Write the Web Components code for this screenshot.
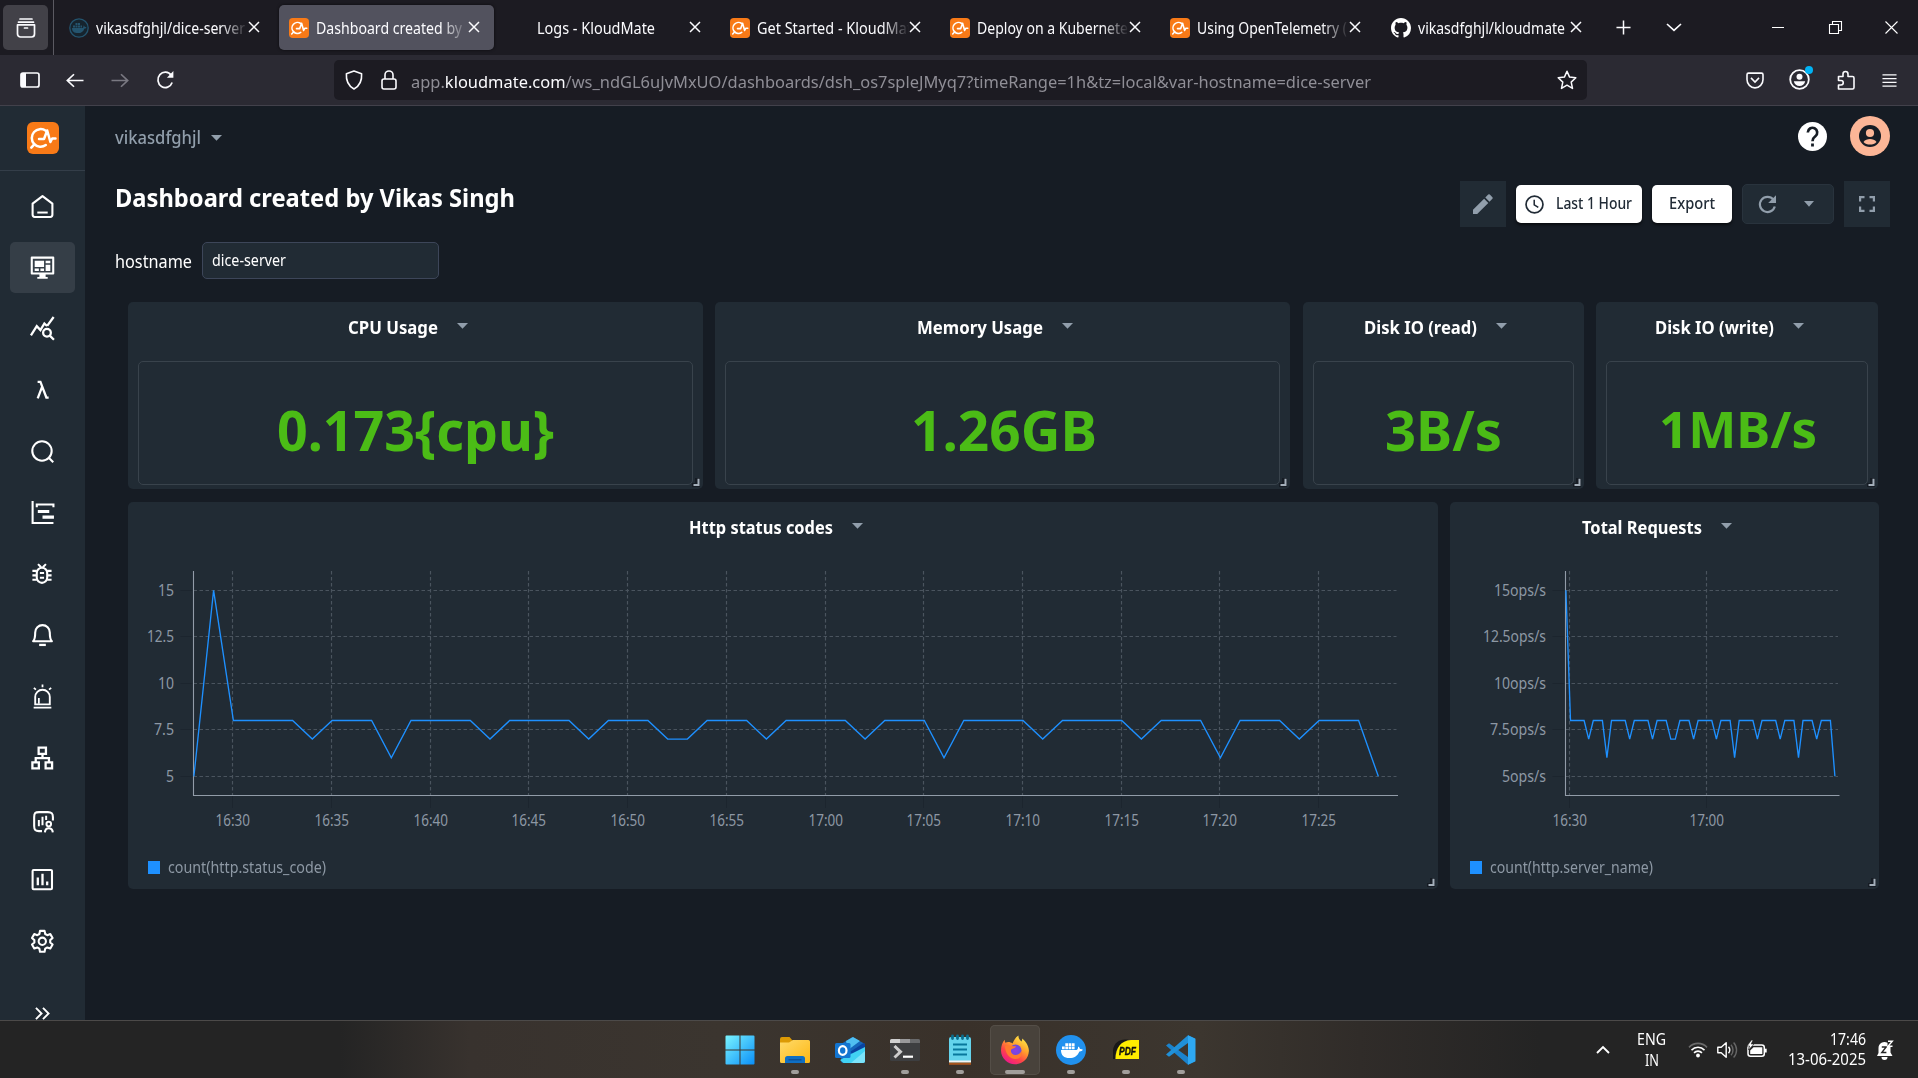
<!DOCTYPE html>
<html lang="en">
<head>
<meta charset="utf-8">
<title>Dashboard - KloudMate</title>
<style>
html,body{margin:0;padding:0;height:100%;overflow:hidden;background:#161c24}
body{font-family:"Noto Sans","Open Sans",sans-serif;color:#fff}
desktop-screen{width:1918px;height:1078px}
</style>
</head>
<body>
<desktop-screen></desktop-screen>
<script>
const ICONS = {
 logo:['0 0 32 32','<rect width="32" height="32" rx="6" fill="#f87a17"/><g fill="none" stroke="#fff" stroke-width="2.500" stroke-linecap="round" stroke-linejoin="round"><path d="M18.800 8.800A8.800 8.800 0 1 0 18.800 23"/><path d="M7.300 22.300L4.300 25.600"/><path d="M12 17h5l3.200-8.500 3.200 11.500 1.800-3.500h3.300"/></g>'],
 archive:['0 0 20 20','<g fill="none" stroke="#fbfbfe" stroke-width="1.7" stroke-linecap="round" stroke-linejoin="round"><path d="M4 1h12"/><path d="M2.5 4.200h15"/><path d="M1.500 6.800h17v9.200a3 3 0 0 1-3 3h-11a3 3 0 0 1-3-3z"/><path d="M8.500 10h3"/></g>'],
 whaleFav:['0 0 20 20','<circle cx="10" cy="10" r="9.200" fill="#16242e" stroke="#24546e" stroke-width="1.300"/><path d="M3 10h10.500c.8 0 1.200-1.600 1-2.500.8.3 1.300 1 1.300 1.600.7 0 1.200.1 1.700.5-.5.9-1.300 1.100-2.200 1.100-1 3-3 4.400-6.300 4.400C5 15.100 3 13.500 3 10zM4 7.500h2v2H4zM6.500 7.500h2v2h-2zM9 7.500h2v2H9zM6.500 5h2v2h-2zM9 5h2v2H9zM11.500 7.500h1.500v2h-1.500z" fill="#24546e"/>'],
 github:['0 0 16 16','<path fill="#fff" d="M8 0C3.580 0 0 3.580 0 8c0 3.540 2.290 6.530 5.470 7.590.4.070.55-.170.55-.380 0-.190-.010-.820-.010-1.490-2.010.370-2.530-.490-2.690-.940-.090-.230-.480-.940-.820-1.130-.280-.150-.680-.520-.010-.530.630-.010 1.080.580 1.230.820.720 1.210 1.870.870 2.330.660.070-.520.280-.870.510-1.070-1.780-.200-3.640-.890-3.640-3.950 0-.870.310-1.590.820-2.150-.080-.200-.360-1.020.080-2.120 0 0 .670-.210 2.200.820.640-.180 1.320-.270 2-.270s1.360.090 2 .270c1.530-1.040 2.200-.820 2.200-.820.440 1.100.160 1.920.080 2.120.510.560.820 1.270.820 2.150 0 3.070-1.870 3.750-3.650 3.950.290.250.540.730.540 1.480 0 1.070-.010 1.930-.010 2.200 0 .210.150.460.550.380A8.010 8.010 0 0 0 16 8c0-4.420-3.580-8-8-8z"/>'],
 x:['0 0 12 12','<path d="M1 1l10 10M11 1L1 11" stroke="#fbfbfe" stroke-width="1.500" fill="none"/>'],
 plus:['0 0 16 16','<path d="M8 .5v15M.5 8h15" stroke="#fbfbfe" stroke-width="1.600"/>'],
 chevD:['0 0 16 10','<path d="M1 1.200l7 7 7-7" fill="none" stroke="#fbfbfe" stroke-width="1.600"/>'],
 min:['0 0 12 12','<path d="M0 5.500h12" stroke="#fff" stroke-width="1"/>'],
 restore:['0 0 13 13','<path d="M.5 3.500h9v9h-9zM3.500 3.500v-3h9v9h-3" fill="none" stroke="#fff" stroke-width="1.100"/>'],
 wx:['0 0 13 13','<path d="M.5 .5l12 12M12.500 .5l-12 12" stroke="#fff" stroke-width="1.100"/>'],
 sidebarBtn:['0 0 20 16','<rect x="1" y="1" width="18" height="14" rx="2" fill="none" stroke="#fbfbfe" stroke-width="1.700"/><path d="M1 1h5v14H1z" fill="#fbfbfe"/>'],
 back:['0 0 18 16','<path d="M17.500 8H1.500M8 1.300L1.300 8 8 14.700" fill="none" stroke="#fbfbfe" stroke-width="1.700"/>'],
 fwd:['0 0 18 16','<path d="M.5 8h16M10 1.300L16.700 8 10 14.700" fill="none" stroke="#7a7982" stroke-width="1.700"/>'],
 reload:['0 0 20 20','<path d="M17 12.500A7.700 7.700 0 1 1 16 5.400" fill="none" stroke="#fbfbfe" stroke-width="1.800"/><path d="M18.300 1v6.800h-6.800z" fill="#fbfbfe"/>'],
 shield:['0 0 18 20','<path d="M9 1l7.600 2.700c.5 6.800-1.700 12-7.600 15.300C3.100 15.700.9 10.500 1.400 3.700z" fill="none" stroke="#fbfbfe" stroke-width="1.600" stroke-linejoin="round"/>'],
 lock:['0 0 16 20','<rect x="1" y="9" width="14" height="10" rx="2" fill="none" stroke="#fbfbfe" stroke-width="1.600"/><path d="M4 9V5a4 4 0 0 1 8 0v4" fill="none" stroke="#fbfbfe" stroke-width="1.600"/>'],
 star:['0 0 20 20','<path d="M10 1.300l2.600 5.800 6.200.7-4.600 4.300 1.300 6.300-5.500-3.200-5.500 3.200 1.300-6.300L1.200 7.800l6.200-.7z" fill="none" stroke="#fbfbfe" stroke-width="1.500" stroke-linejoin="round"/>'],
 pocket:['0 0 18 16','<path d="M2.500 1h13A1.500 1.500 0 0 1 17 2.500V7A8 8 0 0 1 1 7V2.500A1.500 1.500 0 0 1 2.500 1z" fill="none" stroke="#fbfbfe" stroke-width="1.600"/><path d="M5 5.500l4 4 4-4" fill="none" stroke="#fbfbfe" stroke-width="1.600"/>'],
 account:['0 0 24 24','<circle cx="10.500" cy="13.500" r="9.300" fill="none" stroke="#fbfbfe" stroke-width="1.800"/><circle cx="10.500" cy="10.800" r="3" fill="#fbfbfe"/><path d="M4.800 15.300h11.400c-.5 3-3 4.700-5.700 4.700s-5.200-1.700-5.700-4.700z" fill="#fbfbfe"/><circle cx="20" cy="4" r="4" fill="#00b3f4"/>'],
 puzzle:['0 0 18 20','<path d="M1.500 6.500H6V4a2.500 2.500 0 0 1 5 0v2.500h4.500a1.500 1.500 0 0 1 1.500 1.500v9.500a1.500 1.500 0 0 1-1.500 1.500H1.500V15H4a2.200 2.200 0 0 0 0-4.500H1.500z" fill="none" stroke="#fbfbfe" stroke-width="1.600" stroke-linejoin="round"/>'],
 menu:['0 0 16 14','<path d="M.5 1h15M.5 5h15M.5 9h15M.5 13h15" stroke="#fbfbfe" stroke-width="1.300"/>'],
 help:['0 0 29 29','<circle cx="14.500" cy="14.500" r="14.500" fill="#fff"/><path d="M9.800 10.500a4.700 4.700 0 1 1 7.600 3.700c-1.800 1.400-2.900 2.200-2.900 5" fill="none" stroke="#161c24" stroke-width="2.700"/><rect x="13.100" y="21.500" width="2.800" height="3" fill="#161c24"/>'],
 avatar:['0 0 40 40','<circle cx="20" cy="20" r="20" fill="#fcb697"/><circle cx="20" cy="20" r="11" fill="#161c24"/><circle cx="20" cy="17" r="4.100" fill="#fcb697"/><path d="M13.500 26c1.500-2.200 4-3 6.500-3s5 .8 6.500 3c-1.600 1.800-3.900 2.600-6.500 2.600s-4.900-.8-6.500-2.600z" fill="#fcb697"/>'],
 pencil:['0 0 20 20','<path d="M0 15.800V20h4.200L15.300 8.900l-4.200-4.200zM12.300 3.500l4.200 4.200 2.900-2.900a1.100 1.100 0 0 0 0-1.600L16.800.6a1.100 1.100 0 0 0-1.600 0z" fill="#919eab"/>'],
 clock:['0 0 20 20','<circle cx="10" cy="10" r="8.900" fill="none" stroke="#212b36" stroke-width="1.800"/><path d="M9.700 5v5.300l4.300 2.800" fill="none" stroke="#212b36" stroke-width="1.600"/>'],
 refresh:['0 0 18 18','<path d="M15.400 4.600A7.600 7.600 0 1 0 16.800 11.500" fill="none" stroke="#919eab" stroke-width="2.200"/><path d="M18 .2V8h-7.800z" fill="#919eab"/>'],
 caret:['0 0 11 6','<path d="M0 0h11L5.500 5.800z" fill="#919eab"/>'],
 full:['0 0 16 16','<path d="M1.100 5.500V1.100h4.400M10.500 1.100h4.400v4.400M14.900 10.500v4.400h-4.400M5.500 14.900H1.100v-4.400" fill="none" stroke="#919eab" stroke-width="2.200"/>'],
 home:['0 0 24 24','<path d="M2.500 9.300L12 2l9.500 7.300V20a2 2 0 0 1-2 2h-15a2 2 0 0 1-2-2z" fill="none" stroke="#fff" stroke-width="2" stroke-linejoin="round"/><path d="M7 17.800h10" stroke="#fff" stroke-width="1.900"/>'],
 monitor:['0 0 24 24','<path d="M1.700 2.500h20.600v15.300H1.700z" fill="none" stroke="#fff" stroke-width="2" stroke-linejoin="round"/><path d="M9 18h6v3h2v1.800H7V21h2zM4.500 5.500h9v6h-9zM15 5.500h4.500v2.300H15zM15 9.300h4.500v6H15zM4.500 13h4v2.300h-4zM10 13h3.500v2.300H10z" fill="#fff"/>'],
 explore:['0 0 24 24','<g fill="none" stroke="#fff" stroke-width="2.200"><path d="M.9 18.500L6.500 9.800 10 13.500l3.800-6.300 2.600 2.400M16.500 9.500L22.700 1"/><circle cx="16.300" cy="16" r="3.700"/><path d="M19 18.800l4 4"/></g>'],
 lambda:['0 0 24 24','<path d="M7.300 4.700h2.700l5.700 15h2.200M11.500 9.700L7.400 20.500" fill="none" stroke="#fff" stroke-width="2.200"/>'],
 search:['0 0 24 24','<circle cx="11.500" cy="11.500" r="9.300" fill="none" stroke="#fff" stroke-width="2"/><path d="M17.800 17.800l4.500 4.500" stroke="#fff" stroke-width="2"/>'],
 gantt:['0 0 24 24','<path d="M2.500 1v21h20M6.500 7V4.300h16V7" fill="none" stroke="#fff" stroke-width="2"/><path d="M7.500 9.500h11v3h-11zM12 15h11v3H12z" fill="#fff"/>'],
 bug:['0 0 24 24','<g fill="none" stroke="#fff" stroke-width="2"><rect x="6.500" y="6.500" width="10" height="14.500" rx="5"/><path d="M7.700 3l3 3M15.300 3l-3 3M2.300 9.500h4.200M16.500 9.500h4.200M2.300 13.800h4.200M16.500 13.800h4.200M2.300 18h4.200M16.500 18h4.200M9.500 11.500h4M9.500 16h4"/></g>'],
 bell:['0 0 24 24','<path d="M3 18.500c1.700-1.800 2-4 2-8.500a7 7 0 0 1 14 0c0 4.500.3 6.700 2 8.500z" fill="none" stroke="#fff" stroke-width="2" stroke-linejoin="round"/><path d="M8.800 22h6.400" stroke="#fff" stroke-width="2.200"/>'],
 siren:['0 0 24 24','<path d="M5 19.500V12.500a7 7 0 0 1 14 0v7z" fill="none" stroke="#fff" stroke-width="1.800"/><path d="M3.500 22.700h17M12 .5v2.700M3.700 3.700l2 1.700M20.300 3.700l-2 1.700M8.500 19v-5.500" stroke="#fff" stroke-width="1.700" fill="none"/>'],
 sitemap:['0 0 24 24','<path d="M8.300 2.500h7v6h-7zM2.300 16.700h6.200v5.700H2.300zM15 16.700h6.200v5.700H15zM12 8.500v4M5.500 16.500v-4h12.700v4" fill="none" stroke="#fff" stroke-width="2.200"/>'],
 report:['0 0 24 24','<path d="M11.500 21.200h-3c-3.600 0-4.500-1.200-4.500-5V8c0-4.200 1-5 4.700-5h8.500c3.800 0 4.800 1.200 4.800 5v3" fill="none" stroke="#fff" stroke-width="2"/><path d="M8.500 10.500v6M12 7.500v8M15.500 6.500v4" stroke="#fff" stroke-width="1.900"/><circle cx="18" cy="14.500" r="2.200" fill="none" stroke="#fff" stroke-width="1.900"/><path d="M14.300 22.500c.2-2.800 1.600-4 3.700-4s3.600 1.200 3.900 4" fill="none" stroke="#fff" stroke-width="2"/>'],
 bars:['0 0 24 24','<rect x="2.500" y="2.800" width="18.600" height="18.600" rx="1" fill="none" stroke="#fff" stroke-width="2"/><path d="M7.500 10v7.500M12 6.500v11M16.500 14v3.500" stroke="#fff" stroke-width="2.200"/>'],
 gear:['0 0 24 24','<path d="M9.600 1.800h4.400l.6 3 2 1.100 2.900-1 2.200 3.800-2.300 2v2.200l2.300 2-2.200 3.800-2.900-1-2 1.100-.6 3H9.600l-.6-3-2-1.100-2.900 1-2.200-3.800 2.300-2v-2.200l-2.300-2L4.100 4.900l2.900 1 2-1.100z" fill="none" stroke="#fff" stroke-width="2" stroke-linejoin="round"/><circle cx="11.800" cy="11.800" r="3.500" fill="none" stroke="#fff" stroke-width="2"/>'],
 dbl:['0 0 16 14','<path d="M1 1l6 6-6 6M8.500 1l6 6-6 6" fill="none" stroke="#fff" stroke-width="2"/>'],
 grip:['0 0 8 9','<path d="M0 5h3V0h5v9H0z" fill="#161c24"/><path d="M1.500 7h5V.8" fill="none" stroke="#a3aeb9" stroke-width="2"/>'],
 win:['0 0 30 30','<defs><linearGradient id="w" x1="0" y1="0" x2="1" y2="1"><stop offset="0" stop-color="#7af4ff"/><stop offset="1" stop-color="#0a8ff8"/></linearGradient></defs><path d="M1.500.5h13v14h-14v-13a1 1 0 0 1 1-1zM15.500.5h13a1 1 0 0 1 1 1v13h-14zM.5 15.500h14v14h-13a1 1 0 0 1-1-1zM15.500 15.500h14v13a1 1 0 0 1-1 1h-13z" fill="url(#w)"/>'],
 folder:['0 0 30 30','<defs><linearGradient id="f" x1="0" y1="0" x2="1" y2="1"><stop offset="0" stop-color="#ffda6a"/><stop offset="1" stop-color="#fdb813"/></linearGradient></defs><path d="M0 4a2 2 0 0 1 2-2h7.500l3 3.500H13V10H0z" fill="#dc9a05"/><path d="M0 7.500h9L13 5h15.500A1.500 1.500 0 0 1 30 6.500v20a1.500 1.500 0 0 1-1.500 1.500h-27A1.500 1.500 0 0 1 0 26.500z" fill="url(#f)"/><path d="M5 28v-4.500A2.500 2.500 0 0 1 7.500 21h15a2.500 2.500 0 0 1 2.500 2.500V28z" fill="#0f6fc3"/><path d="M8.500 24.800h13" stroke="#0a4c91" stroke-width="1.200"/>'],
 outlook:['0 0 30 30','<path d="M6 9L17.500 2 30 9v16.500a2.500 2.500 0 0 1-2.500 2.500h-19A2.500 2.500 0 0 1 6 25.500z" fill="#1566ba"/><path d="M11 6l7-4 7 4-12 9z" fill="#4fbff1"/><path d="M15 17L28.500 8 30 9v4L19 20z" fill="#0a43a0"/><path d="M15 19.500L30 12v13.500a2.500 2.500 0 0 1-2.500 2.500h-19L5 25z" fill="#41d2f3"/><path d="M16 28l14-12v9.500a2.500 2.500 0 0 1-2.500 2.500z" fill="#7be3fa"/><rect y="8" width="15.500" height="15" rx="1.500" fill="#1375d1"/><ellipse cx="7.700" cy="15.500" rx="3.800" ry="4.300" fill="none" stroke="#fff" stroke-width="2.200"/>'],
 term:['0 0 30 30','<rect y="4" width="30" height="22" rx="1.500" fill="#3d3e40"/><path d="M1.500 4H10v4H0V5.500A1.500 1.500 0 0 1 1.500 4z" fill="#cfcfcf"/><path d="M10 4h10v4H10z" fill="#99999b"/><path d="M20 4h8.500A1.500 1.500 0 0 1 30 5.500V8H20z" fill="#68696b"/><path d="M4.500 11l6 5.800-6 5.700" fill="none" stroke="#ccc" stroke-width="3"/><path d="M13 21.700h10" stroke="#fff" stroke-width="2.200"/>'],
 notepad:['0 0 30 30','<path d="M4 4a2 2 0 0 1 2-2h18a2 2 0 0 1 2 2v24H4z" fill="#64d3ec"/><path d="M4 25.500h22v2H4z" fill="#f4f4f4"/><path d="M4 27.500h22v2.300H4z" fill="#a7551d"/><path d="M8 9.500h14M8 14.500h14M8 19.500h14" stroke="#08779c" stroke-width="1.900"/><path d="M7.500 1v2.500M12.500 1v2.500M17.500 1v2.500M22.500 1v2.500" stroke="#0b6e8e" stroke-width="2.800" stroke-linecap="round"/>'],
 firefox:['0 0 30 30','<defs><linearGradient id="x" x1=".85" y1=".05" x2=".25" y2="1"><stop offset="0" stop-color="#fff04a"/><stop offset=".38" stop-color="#ffa02c"/><stop offset=".68" stop-color="#ff4646"/><stop offset="1" stop-color="#ec1392"/></linearGradient><radialGradient id="y"><stop offset="0" stop-color="#8a3fe6"/><stop offset="1" stop-color="#6a4bdc"/></radialGradient></defs><path d="M18.500.5c-.3 3 1.500 4.500 3 6 .5-1 .8-2 .7-3C26 6.500 29 11.500 28.900 16 28.500 24 22.500 29.200 15 29.200S1.200 23.500 1 15.500C1 11 2.500 7 4.700 4.700c0 1.300.2 2.200.7 3C8 6.500 10.500 7 12.500 8.500 14 5.500 15.500 2 18.500.5z" fill="url(#x)"/><circle cx="15.500" cy="15.500" r="6" fill="url(#y)"/><path d="M5 11c3-1.500 7 .5 11 .3-.5 2-3.500 2.200-4.800 3.200-1 2.800 1 5.500 4.500 5.500 3 0 5-2 5.800-4.200C23 20 20 24 15.500 24 9.500 24 5 18 5 11z" fill="#ff7b2d"/>'],
 docker:['0 0 30 30','<circle cx="15" cy="15" r="15" fill="#2191ee"/><path d="M5 15h15.500c1.300 0 1.700-2.300 1.500-3.500 1.200.5 1.900 1.500 1.900 2.400 1.200-.1 2.200.1 3 .8-.8 1.400-2.100 1.800-3.500 1.700C21.500 21 18.300 23 13.500 23 8 23 5 20.500 5 15zM6 11.500h2.700v2.700H6zM9.300 11.500H12v2.700H9.300zM12.600 11.500h2.700v2.700h-2.700zM15.900 11.500h2.700v2.700h-2.700zM9.300 8.200H12v2.700H9.300zM12.600 8.200h2.700v2.700h-2.700zM15.900 8.200h2.700v2.700h-2.700z" fill="#fff"/>'],
 pdf:['0 0 30 30','<path d="M2 24V15C3 8 8 4.500 14 4.500h4C8 8 4 15 4 24z" fill="#181818"/><path d="M4.500 24C4.500 13 10 5.500 20 5h8v19z" fill="#ffed00"/>'],
 vscode:['0 0 30 30','<path d="M22 .3L29 3.500v23l-7 3.200L0 10.500l3-2.300L22 22z" fill="#1b83cd"/><path d="M0 19.500L22 .3V8L3 21.800z" fill="#2090d8"/><path d="M22 .3l7.500 3.400v22.600L22 29.700z" fill="#2ea8f2"/>'],
 up:['0 0 14 9','<path d="M1 8l6-6 6 6" fill="none" stroke="#fff" stroke-width="1.900"/>'],
 wifi:['0 0 20 16','<g fill="none" stroke-width="1.500"><path d="M1 6a12.700 12.700 0 0 1 18 0" stroke="#6b6b6b"/><path d="M3.500 8.600a9.200 9.200 0 0 1 13 0M6 11.200a5.700 5.700 0 0 1 8 0" stroke="#fff"/></g><circle cx="10" cy="13.700" r="1.900" fill="#fff"/>'],
 vol:['0 0 20 18','<path d="M.8 6.200h3.400l5-4.500v14.600l-5-4.500H.8z" fill="none" stroke="#fff" stroke-width="1.400" stroke-linejoin="round"/><path d="M11.500 5.800a5 5 0 0 1 0 6.400" fill="none" stroke="#fff" stroke-width="1.400"/><path d="M14 3.700a8 8 0 0 1 0 10.600M16.600 1.500a11 11 0 0 1 0 15" fill="none" stroke="#666" stroke-width="1.400"/>'],
 bat:['0 0 20 18','<rect x="1" y="5" width="16.300" height="11.300" rx="2.500" fill="none" stroke="#fff" stroke-width="1.500"/><path d="M6.500 7.200h8.800v6.900H3.200v-3.500z" fill="#fff"/><path d="M17.500 8.700h2.200v3.800h-2.200z" fill="#fff"/><path d="M4.500 0L0 6h2.500L1.500 10 7 4H4.200L6 0z" fill="#fff" stroke="#242424" stroke-width=".6"/>'],
 dnd:['0 0 18 20','<path d="M1 16l1.500-3V8a6 6 0 0 1 9-5.200V7h3v5.500L16.500 16z" fill="#fff"/><path d="M5.500 17h6a3 3 0 0 1-6 0z" fill="#fff"/><path d="M5.800 7h4.400l-4.400 5.500h4.600" fill="none" stroke="#242424" stroke-width="1.400"/><path d="M12 1.200h4.300L12 6.200h4.500" fill="none" stroke="#fff" stroke-width="1.400"/>']
};

function define(name, css, html, after){
  customElements.define(name, class extends HTMLElement{
    connectedCallback(){
      if(this.shadowRoot) return;
      const root = this.attachShadow({mode:'open'});
      root.innerHTML = '<style>*{box-sizing:border-box}'+css+'</style>'+(typeof html==='function'?html(this):html);
      if(after) after(this, root);
    }
  });
}

/* x-icon: named glyph with width w and height h */
define('x-icon', ':host{display:block;flex:none}svg{display:block;overflow:visible}', el=>{
  const i = ICONS[el.getAttribute('name')], w = el.getAttribute('w')||24, h = el.getAttribute('h')||w;
  return `<svg width="${w}" height="${h}" viewBox="${i[0]}" preserveAspectRatio="none">${i[1]}</svg>`;
});

/* fit-text: one line of text condensed to exactly w pixels */
define('fit-text', ':host{display:block;flex:none;white-space:pre;line-height:1.36}span{display:inline-block;transform-origin:0 50%}', '<span><slot></slot></span>', (el,root)=>{
  const s = root.querySelector('span'), w = +el.getAttribute('w');
  el.style.width = w+'px';
  const n = s.getBoundingClientRect().width;
  if(n) s.style.transform = `scaleX(${w/n})`;
});

define('browser-tab', `:host{display:flex;align-items:center;width:215px;height:45px;margin:5px 5.300px 5px 0;border-radius:5px;padding-left:10px;font-size:15.500px;color:#fbfbfe;flex:none}
:host([active]){background:#52525e;box-shadow:0 0 3px #000a}
.i{width:20px;flex:none}.t{width:156px;margin-left:7px;flex:none;padding-top:2px}
:host([fade]) .t{-webkit-mask:linear-gradient(90deg,#000 125px,transparent 152px);mask:linear-gradient(90deg,#000 125px,transparent 152px)}
x-icon.c{margin:-2px 0 0 -4px}`,
 el=>`<div class="i">${el.hasAttribute('icon')?`<x-icon name="${el.getAttribute('icon')}" w="20"></x-icon>`:''}</div><div class="t"><fit-text w="${el.getAttribute('w')}">${el.getAttribute('label')}</fit-text></div><x-icon class="c" name="x" w="12"></x-icon>`);

define('tab-strip', `:host{display:flex;height:55px;background:#1c1b22;align-items:center}
.first{width:45px;height:45px;margin-left:3px;border-radius:5px;background:#424148;display:flex;align-items:center;justify-content:center}
.line{width:1px;height:55px;background:#5b5a62;margin:0 5px 0 5px}
.tabs{display:flex;width:1553px}.w{display:flex;align-items:center;margin-top:0}`,
`<div class="first"><x-icon name="archive" w="20"></x-icon></div><div class="line"></div>
<div class="tabs"><browser-tab fade icon="whaleFav" label="vikasdfghjl/dice-server" w="149"></browser-tab>
<browser-tab active fade icon="logo" label="Dashboard created by" w="146"></browser-tab>
<browser-tab label="Logs - KloudMate" w="118"></browser-tab>
<browser-tab fade icon="logo" label="Get Started - KloudMat" w="155"></browser-tab>
<browser-tab fade icon="logo" label="Deploy on a Kubernete" w="151"></browser-tab>
<browser-tab fade icon="logo" label="Using OpenTelemetry (" w="150"></browser-tab>
<browser-tab icon="github" label="vikasdfghjl/kloudmate" w="147"></browser-tab></div>
<div class="w"><x-icon name="plus" w="15" style="margin-left:4px"></x-icon><x-icon name="chevD" w="16" h="9" style="margin-left:35px"></x-icon><x-icon name="min" w="12" style="margin-left:90px"></x-icon><x-icon name="restore" w="13" style="margin-left:45px"></x-icon><x-icon name="wx" w="13" style="margin-left:43px"></x-icon></div>`);

define('nav-bar', `:host{display:flex;height:51px;background:#2b2a33;border-bottom:1px solid #42414b;align-items:center;padding-left:20px}
.url{width:1253px;height:40px;margin-left:159px;background:#1c1b22;border-radius:5px;display:flex;align-items:center;padding-left:11px;font-size:17px;color:#8f8e96}
b{font-weight:400;color:#fbfbfe}`,
`<x-icon name="sidebarBtn" w="20" h="16"></x-icon><x-icon name="back" w="18" h="15" style="margin-left:26px"></x-icon><x-icon name="fwd" w="18" h="15" style="margin-left:27px"></x-icon><x-icon name="reload" w="19" h="20" style="margin-left:27px"></x-icon>
<div class="url"><x-icon name="shield" w="18" h="20"></x-icon><x-icon name="lock" w="16" h="20" style="margin-left:18px"></x-icon><fit-text w="960" style="margin:3px 0 0 14px">app.<b>kloudmate.com</b>/ws_ndGL6uJvMxUO/dashboards/dsh_os7spleJMyq7?timeRange=1h&amp;tz=local&amp;var-hostname=dice-server</fit-text><x-icon name="star" w="20" style="margin-left:186px"></x-icon></div>
<x-icon name="pocket" w="18" h="17" style="margin-left:159px"></x-icon><x-icon name="account" w="24" style="margin:-4px 0 0 25px"></x-icon><x-icon name="puzzle" w="18" h="20" style="margin-left:24px"></x-icon><x-icon name="menu" w="15" h="13" style="margin-left:27px"></x-icon>`);

define('side-bar', `:host{display:flex;flex-direction:column;width:85px;height:914px;background:#212b34;align-items:center;overflow:hidden;flex:none}
.logo{height:65px;width:85px;border-bottom:1px solid #343e49;display:flex;align-items:center;justify-content:center}
nav{display:flex;flex-direction:column;gap:10.250px;margin-top:9.500px}
.n{width:65px;height:51px;border-radius:5px;display:flex;align-items:center;justify-content:center}.n.on{background:#353e47}
.m{margin-top:40px}`,
()=>`<div class="logo"><x-icon name="logo" w="32"></x-icon></div><nav>${['home','monitor','explore','lambda','search','gantt','bug','bell','siren','sitemap','report','bars','gear'].map((n,i)=>`<div class="n${i==1?' on':''}"><x-icon name="${n}" w="25"${n=='report'?' style="margin-top:5px"':''}></x-icon></div>`).join('')}</nav><x-icon class="m" name="dbl" w="15" h="13"></x-icon>`);

define('page-head', `:host{display:block;padding:0 28px 0 30px}
.top{display:flex;height:64px;align-items:center;color:#919eab;font-size:18px}
.row{display:flex;height:68px;align-items:center;justify-content:space-between}
.acts{display:flex;align-items:center;gap:10px}
.sq{width:46px;height:46px;background:#212b34;display:flex;align-items:center;justify-content:center}
.wb{height:38px;background:#fff;border-radius:5px;display:flex;align-items:center;justify-content:center;color:#212b36;font-weight:500;font-size:15.500px;box-shadow:0 2px 3px #0009}
.gp{width:92px;height:40px;background:#212b34;border:1px solid #29333d;border-radius:5px;display:flex;align-items:center;padding-left:15px}
.f{display:flex;align-items:center;height:46px;font-size:18px}
.in{width:237px;height:37px;margin:-1px 0 0 10px;border:1px solid #3d4659;border-radius:5px;background:#212b34;display:flex;align-items:center;padding-left:9px;font-size:15.500px}`,
`<div class="top"><fit-text w="86" style="margin-top:-2px;font-weight:500">vikasdfghjl</fit-text><x-icon name="caret" w="11" h="6" style="margin-left:10px"></x-icon>
<x-icon name="help" w="29" style="margin:-3px 23.500px 0 auto"></x-icon><x-icon name="avatar" w="40" style="margin-top:-4px"></x-icon></div>
<div class="row"><fit-text w="400" style="font-size:24.500px;font-weight:700;margin-top:-12px">Dashboard created by Vikas Singh</fit-text>
<div class="acts"><div class="sq"><x-icon name="pencil" w="20"></x-icon></div>
<div class="wb" style="width:126px"><x-icon name="clock" w="19" style="margin-left:-1px"></x-icon><fit-text w="76" style="margin-left:12px">Last 1 Hour</fit-text></div>
<div class="wb" style="width:80px"><fit-text w="46">Export</fit-text></div>
<div class="gp"><x-icon name="refresh" w="18"></x-icon><x-icon name="caret" w="10" h="6" style="margin-left:28px"></x-icon></div>
<div class="sq"><x-icon name="full" w="16"></x-icon></div></div></div>
<div class="f"><fit-text w="77">hostname</fit-text><div class="in"><fit-text w="74">dice-server</fit-text></div></div>`);

define('dash-card', `:host{display:flex;flex-direction:column;background:#212b34;border-radius:5px;position:relative;flex:none}
.h{height:50px;display:flex;align-items:center;justify-content:center;font-weight:700;font-size:17px;flex:none;padding-top:1px}
.c{width:45px;padding:0 0 3px 19px}
.g{position:absolute;right:3px;bottom:2px}`,
el=>`<div class="h"><fit-text w="${el.getAttribute('w')}">${el.getAttribute('label')}</fit-text><div class="c"><x-icon name="caret" w="11" h="6"></x-icon></div></div><slot></slot><x-icon class="g" name="grip" w="8" h="9"></x-icon>`);

define('stat-value', `:host{display:flex;height:124px;margin:9px 10px 0;border:1px solid #39434c;border-radius:5px;align-items:center;justify-content:center;padding-top:12px;color:#4bbc16;font-weight:700}`,
el=>`<fit-text w="${el.getAttribute('w')}" style="font-size:${el.getAttribute('size')||56}px">${el.getAttribute('value')}</fit-text>`);

/* line-chart: axes, dashed grid and one series; the data is one value per minute */
const SERIES = [5,15,8,8,8,8,7,8,8,8,6,8,8,8,8,7,8,8,8,8,7,8,8,8,7,7,8,8,8,7,8,8,8,8,7,8,8,8,6,8,8,8,8,7,8,8,8,8,7,8,8,8,6,8,8,8,7,8,8,8,5];
define('line-chart', `:host{display:block}svg{display:block}text{font-size:15.500px;fill:#8d98a4}
.leg{display:flex;align-items:center;height:44px;padding:4px 0 0 20px;color:#8d98a4;font-size:15.500px}
i{display:block;width:12px;height:13px;background:#1e90ff;margin:-2px 7.500px 0 0}`, el=>{
  const a = k=>+el.getAttribute(k), unit = el.getAttribute('unit')||'';
  const W=a('width'), x0=a('x0'), x1=a('x1'), first=a('first'), base=a('base'), step=a('step'), every=a('every'), last=a('last');
  const Y = v=>224-(v-5)*18.6;
  const yw = JSON.parse(el.getAttribute('yw'));
  let s='';
  [15,12.5,10,7.5,5].forEach((v,i)=>{
    const y=Math.round(Y(v)-.2)+.5;
    s+=`<path d="M${x0} ${y}H${x1-1.500}" stroke="#4a545e" stroke-dasharray="3.500 2.500" stroke-width="1.200"/><path d="M${x0-13} ${y}h12" stroke="#1c252e"/><text x="${x0-19.500-yw[i]}" y="${y+5}" textLength="${yw[i]}" lengthAdjust="spacingAndGlyphs">${v}${unit}</text>`;
  });
  for(let m=2;m<=last;m+=every){
    const x=Math.round(base+(m-first)*step)-.5, t=(m-2), h=t>=30?17:16, mm=String((30+t)%60).padStart(2,'0');
    s+=`<path d="M${x} 19V243" stroke="#4a545e" stroke-dasharray="3.500 2.500" stroke-width="1.200"/><path d="M${x} 244v12" stroke="#1c252e"/><text x="${x-17}" y="274" textLength="34.500" lengthAdjust="spacingAndGlyphs">${h}:${mm}</text>`;
  }
  const pts = SERIES.slice(first).map((v,i)=>(base+i*step).toFixed(1)+','+(Y(v)+.3).toFixed(1)).join(' ');
  s+=`<path d="M${x0} 19V243.500H${x1}" fill="none" stroke="#929ca8" stroke-width="1.100"/><polyline points="${pts}" fill="none" stroke="#1e90ff" stroke-width="1.350"/>`;
  return `<svg width="${W}" height="292" viewBox="0 0 ${W} 292">${s}</svg><div class="leg"><i></i><fit-text w="${a('lw')}">${el.getAttribute('legend')}</fit-text></div>`;
});

define('dash-grid', `:host{display:flex;flex-direction:column;gap:13px;padding:18px 0 0 43px}
.r{display:flex;gap:12.400px}.a>*{height:187px}.b>*{height:387px}`,
`<div class="r a"><dash-card label="CPU Usage" w="90" style="width:575px"><stat-value value="0.173{cpu}" w="277"></stat-value></dash-card>
<dash-card label="Memory Usage" w="126" style="width:575px"><stat-value value="1.26GB" w="186" style="padding-left:2px"></stat-value></dash-card>
<dash-card label="Disk IO (read)" w="113" style="width:281.200px"><stat-value value="3B/s" w="117"></stat-value></dash-card>
<dash-card label="Disk IO (write)" w="119" style="width:281.800px"><stat-value value="1MB/s" w="158" size="51" style="padding-left:2px"></stat-value></dash-card></div>
<div class="r b"><dash-card label="Http status codes" w="144" style="width:1310px"><line-chart width="1310" x0="65.500" x1="1270" base="65.900" first="0" step="19.740" every="5" last="57" yw="[16,27,16,20,8]" legend="count(http.status_code)" lw="158"></line-chart></dash-card>
<dash-card label="Total Requests" w="120" style="width:428.500px"><line-chart width="428" unit="ops/s" x0="115.500" x1="389.500" base="115.900" first="1" step="4.560" every="30" last="57" yw="[52,63,52,56,44]" legend="count(http.server_name)" lw="163"></line-chart></dash-card></div>`);

define('app-view', ':host{display:flex;height:914px;background:#161c24}main{flex:1}', '<side-bar></side-bar><main><page-head></page-head><dash-grid></dash-grid></main>');

define('task-bar', `:host{display:flex;height:58px;border-top:1px solid #4c4a49;align-items:center;background:linear-gradient(90deg,#242424 0,#242424 340px,#38322e 470px,#3b352f 720px,#39312a 960px,#3c362f 1200px,#302c29 1360px,#242424 1540px)}
.apps{display:flex;margin-left:714.500px;gap:5.200px;width:500px;flex:none}
.a{width:50px;height:50px;border-radius:5px;display:flex;flex-direction:column;align-items:center;padding-top:10px;flex:none}
.a.on{background:#48423b;box-shadow:inset 0 0 0 1px #544e47}
.a i{width:8px;height:4px;border-radius:2px;background:#a19e9b;margin-top:5px}.a.on i{width:20px}
.pdf{display:grid}.pdf>*{grid-area:1/1}.pdf fit-text{font:italic 900 10px/1 "Liberation Sans",sans-serif;color:#111;margin:12px 0 0 8px;-webkit-text-stroke:.4px #111}
.tray{display:flex;align-items:center;margin-left:381.500px;font-size:15.500px}
.s{display:flex;flex-direction:column;align-items:center}.s fit-text{line-height:20.500px}.e{align-items:flex-end}`,
()=>`<div class="apps">${['win','folder','outlook','term','notepad','firefox','docker','pdf','vscode'].map((n,i)=>`<div class="a${i==5?' on':''}">${n=='pdf'?'<div class="pdf"><x-icon name="pdf" w="30"></x-icon><fit-text w="17">PDF</fit-text></div>':`<x-icon name="${n}" w="30"></x-icon>`}${i==0||i==2?'':'<i></i>'}</div>`).join('')}</div>
<div class="tray"><x-icon name="up" w="14" h="9"></x-icon><div class="s" style="margin-left:27px"><fit-text w="29">ENG</fit-text><fit-text w="14">IN</fit-text></div><x-icon name="wifi" w="20" h="17" style="margin-left:22px"></x-icon><x-icon name="vol" w="20" h="18" style="margin-left:9px"></x-icon><x-icon name="bat" w="20" h="18" style="margin:-2px 0 0 10px"></x-icon><div class="s e" style="margin:-1px 0 0 21px"><fit-text w="36">17:46</fit-text><fit-text w="78">13-06-2025</fit-text></div><x-icon name="dnd" w="18" h="20" style="margin-left:10px"></x-icon></div>`);

define('desktop-screen', ':host{display:flex;flex-direction:column;overflow:hidden}', '<tab-strip></tab-strip><nav-bar></nav-bar><app-view></app-view><task-bar></task-bar>');
</script>
</body>
</html>
